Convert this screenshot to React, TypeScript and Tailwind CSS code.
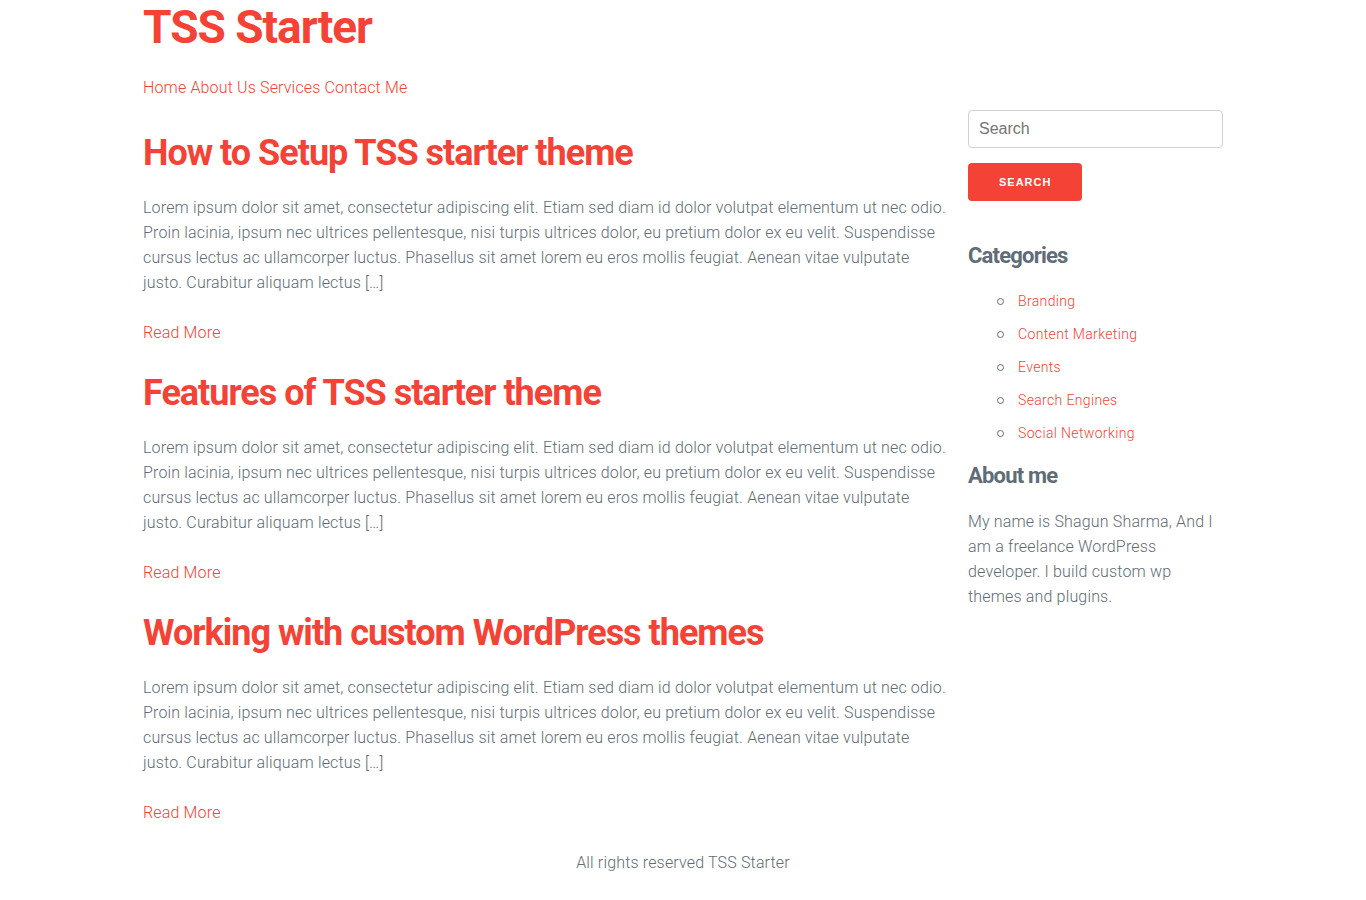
const posts = [
  'How to Setup TSS starter theme',
  'Features of TSS starter theme',
  'Working with custom WordPress themes',
];

const excerpt =
  'Lorem ipsum dolor sit amet, consectetur adipiscing elit. Etiam sed diam id dolor volutpat elementum ut nec odio. Proin lacinia, ipsum nec ultrices pellentesque, nisi turpis ultrices dolor, eu pretium dolor ex eu velit. Suspendisse cursus lectus ac ullamcorper luctus. Phasellus sit amet lorem eu eros mollis feugiat. Aenean vitae vulputate justo. Curabitur aliquam lectus […]';

const menu = ['Home', 'About Us', 'Services', 'Contact Me'];
const categories = ['Branding', 'Content Marketing', 'Events', 'Search Engines', 'Social Networking'];

export default function App() {
  return (
    <div className="mx-auto max-w-[1080px] font-['Roboto',sans-serif] text-base leading-[25px] font-light tracking-[0.01em] text-[#606c76]">
      <header>
        <h1 className="text-[46px] leading-[55px] font-bold tracking-[-1px]">
          <a href="#" className="text-[#f44336]">TSS Starter</a>
        </h1>
        <nav className="mt-5 flex flex-wrap gap-1">
          {menu.map((item) => (
            <a key={item} href="#" className="text-[#f44336]">{item}</a>
          ))}
        </nav>
      </header>
      <div className="mt-[10px] flex gap-5">
        <main className="min-w-0 flex-1 pt-5">
          {posts.map((title) => (
            <article key={title} className="mb-[25px]">
              <h2 className="mb-[18px] text-4xl leading-[47px] font-bold tracking-[-1px]">
                <a href="#" className="text-[#f44336]">{title}</a>
              </h2>
              <p className="mb-[25px]">{excerpt}</p>
              <a href="#" className="block text-[#f44336]">Read More</a>
            </article>
          ))}
        </main>
        <aside className="w-[255px] shrink-0">
          <form role="search" onSubmit={(e) => e.preventDefault()}>
            <input
              type="text"
              aria-label="Search"
              placeholder="Search"
              className="mb-[15px] block h-[38px] w-full rounded border border-[#d1d1d1] px-[10px] font-['Liberation_Sans',sans-serif] font-normal tracking-normal placeholder:text-[#757575]"
            />
            <button
              type="submit"
              className="block h-[38px] rounded bg-[#f44336] px-[31px] font-['Liberation_Sans',sans-serif] text-[11px] font-bold tracking-[1px] text-white uppercase"
            >
              Search
            </button>
          </form>
          <h3 className="mt-10 mb-[18px] text-[22px] leading-[30px] font-bold tracking-[-0.8px]">Categories</h3>
          <ul className="mb-[15px] pl-[29px] text-sm leading-[25px] tracking-wide">
            {categories.map((name) => (
              <li
                key={name}
                className="mb-2 flex items-center gap-[14px] before:size-[7px] before:rounded-full before:border before:border-[#606c76]"
              >
                <a href="#" className="text-[#f44336]">{name}</a>
              </li>
            ))}
          </ul>
          <h3 className="mb-[18px] text-[22px] leading-[30px] font-bold tracking-[-0.8px]">About me</h3>
          <p>
            My name is Shagun Sharma, And I am a freelance WordPress developer. I build custom wp themes and plugins.
          </p>
        </aside>
      </div>
      <footer className="pb-[25px] text-center">All rights reserved TSS Starter</footer>
    </div>
  );
}
